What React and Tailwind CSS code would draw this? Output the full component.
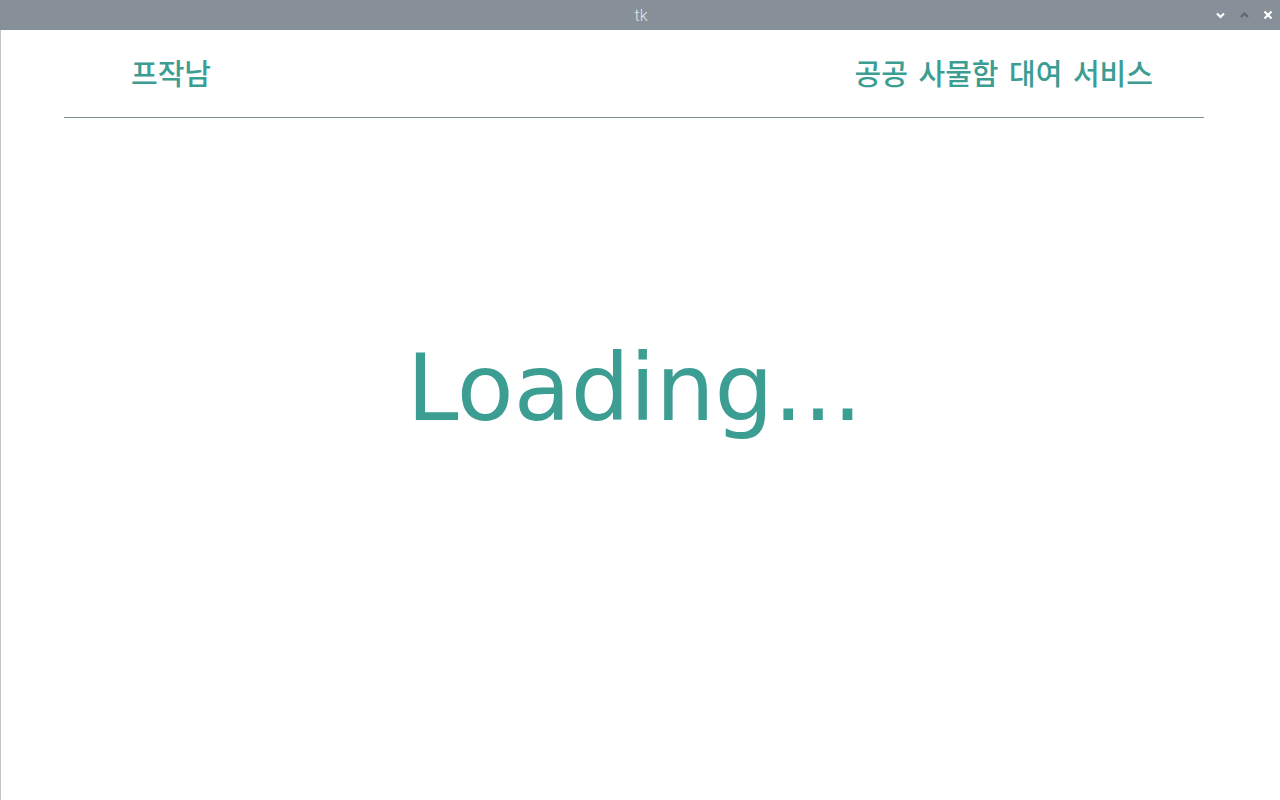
import React from "react";

const teal = "text-[#3c9d93]";

export default function App() {
  return (
    <div className="w-[1280px] h-[800px] bg-white flex flex-col overflow-hidden">
      {/* title bar */}
      <div className="h-[30px] bg-[#878f98] flex items-center relative shrink-0">
        <div className="flex-1 text-center text-[16px] text-[#e2e5e8] font-['Roboto',sans-serif] font-light leading-none pt-[1px] pl-[2px]">tk</div>
        <div className="absolute right-[7px] top-0 h-[30px] flex items-center gap-[13px]">
          <svg width="11" height="8" viewBox="0 0 11 8"><path d="M2 2.5 L5.5 6 L9 2.5" stroke="#ffffff" strokeWidth="2.2" fill="none" /></svg>
          <svg width="11" height="8" viewBox="0 0 11 8"><path d="M2 6 L5.5 2.5 L9 6" stroke="#5f666d" strokeWidth="2.2" fill="none" /></svg>
          <svg width="10" height="10" viewBox="0 0 10 10"><path d="M1.5 1.5 L8.5 8.5 M8.5 1.5 L1.5 8.5" stroke="#ffffff" strokeWidth="2.2" fill="none" /></svg>
        </div>
      </div>
      {/* body */}
      <div className="flex-1 flex flex-col border-l border-[#c4c4c4]">
        <div className="ml-[63px] mr-[76px] h-[88px] border-b border-[#7f8f8c] flex items-center justify-between font-['Noto_Sans_CJK_KR',sans-serif] font-medium text-[29px]">
          <div className={`pl-[67px] ${teal} pb-[2px]`}>프작남</div>
          <div className={`pr-[51px] ${teal} pb-[2px] [word-spacing:4px]`}>공공 사물함 대여 서비스</div>
        </div>
        <div className="flex-1 flex items-start justify-center pt-[224px]">
          <div className={`font-['DejaVu_Sans',sans-serif] text-[93px] leading-none ${teal} -ml-[12px]`}>Loading...</div>
        </div>
      </div>
    </div>
  );
}
